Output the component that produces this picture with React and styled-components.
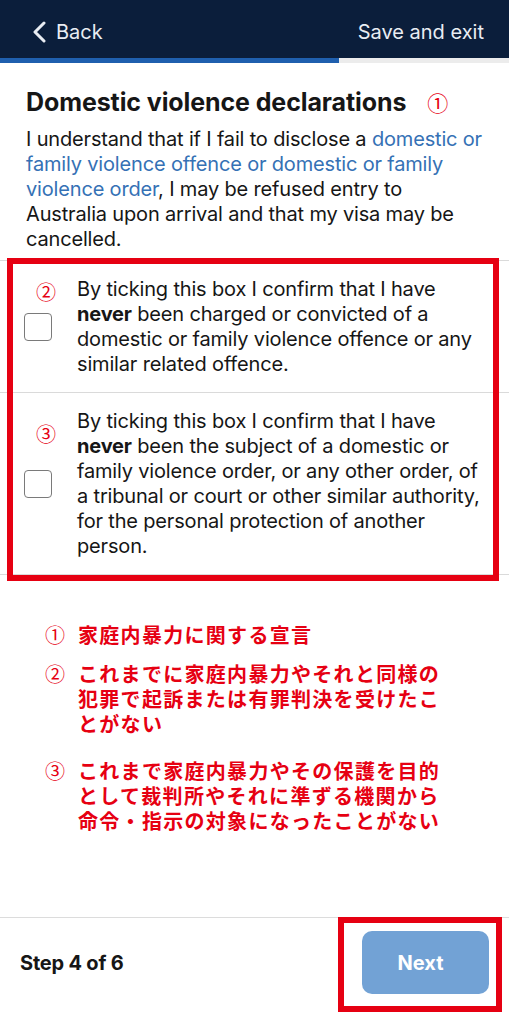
import React from "react";
import styled, { createGlobalStyle } from "styled-components";

const red = "#e60012";
const navy = "#0b1e3b";
const textColor = "#161616";

const GlobalStyle = createGlobalStyle`
  html, body {
    margin: 0;
    padding: 0;
    background: #ffffff;
  }
  body {
    font-family: Inter, "Liberation Sans", "Noto Sans CJK JP", sans-serif;
    color: ${textColor};
  }
  * {
    box-sizing: border-box;
  }
`;

const Page = styled.div`
  display: flex;
  flex-direction: column;
  width: 509px;
  height: 1024px;
  overflow: hidden;
  background: #ffffff;
`;

const Header = styled.header`
  display: flex;
  align-items: center;
  justify-content: space-between;
  height: 58px;
  padding: 6px 25px 0 31px;
  background: ${navy};
  color: #e9edf3;
  font-size: 20px;
`;

const BackLink = styled.div`
  display: flex;
  align-items: center;
  gap: 9px;
`;

const Progress = styled.div`
  height: 5px;
  background: #ececec;
`;

const ProgressFill = styled.div`
  height: 100%;
  background: #1f5fae;
`;

const Content = styled.main`
  padding: 24px 22px 0 26px;
`;

const Title = styled.h1`
  display: flex;
  align-items: center;
  gap: 21px;
  margin: 0;
  font-size: 25px;
  line-height: 30px;
  font-weight: 700;
  letter-spacing: -0.1px;
`;

const Circled = styled.span`
  font-family: "Noto Sans CJK JP", sans-serif;
  font-weight: 400;
  color: ${red};
  font-size: ${(props) => props.size || 20}px;
  line-height: 1;
`;

const Intro = styled.p`
  margin: 10px 0 0;
  font-size: 20px;
  line-height: 25px;
  letter-spacing: -0.17px;
`;

const Link = styled.span`
  color: #3571b5;
`;

const List = styled.div`
  position: relative;
  margin-top: 8px;
  border-top: 1px solid #dadada;
  border-bottom: 1px solid #dadada;
`;

const Row = styled.div`
  position: relative;
  display: flex;
  align-items: center;
  gap: 25px;
  padding: 16px 20px 15px 24px;
  & + & {
    border-top: 1px solid #dadada;
  }
`;

const RowNumber = styled(Circled)`
  position: absolute;
  left: 36px;
  top: ${(props) => props.top}px;
`;

const Checkbox = styled.span`
  flex: none;
  width: 28px;
  height: 28px;
  border: 1.5px solid #7a7a7a;
  border-radius: 4px;
`;

const RowText = styled.div`
  font-size: 20px;
  line-height: 25px;
  letter-spacing: -0.17px;
`;

const RedFrame = styled.div`
  position: absolute;
  top: ${(props) => props.top}px;
  left: ${(props) => props.left}px;
  right: ${(props) => props.right}px;
  bottom: ${(props) => props.bottom}px;
  border: 6px solid ${red};
  pointer-events: none;
`;

const Notes = styled.ol`
  list-style: none;
  margin: 47px 0 0;
  padding: 0 0 0 45px;
  color: ${red};
`;

const Note = styled.li`
  display: grid;
  grid-template-columns: 33px 372px;
  margin-bottom: ${(props) => props.after || 0}px;
  font-family: "Noto Sans CJK JP", sans-serif;
  font-weight: 700;
  font-size: 20px;
  line-height: 25px;
  letter-spacing: 1.3px;
`;

const NoteNumber = styled.span`
  font-weight: 400;
  letter-spacing: 0;
`;

const Spacer = styled.div`
  flex: 1;
`;

const Footer = styled.footer`
  display: flex;
  align-items: flex-start;
  justify-content: space-between;
  height: 107px;
  padding: 13px 20px 0 20px;
  border-top: 1px solid #dcdcdc;
`;

const StepLabel = styled.div`
  height: 63px;
  display: flex;
  align-items: center;
  font-size: 20px;
  font-weight: 700;
  letter-spacing: -0.2px;
`;

const ButtonWrap = styled.div`
  position: relative;
`;

const NextButton = styled.button`
  width: 127px;
  height: 63px;
  padding: 0 10px 0 0;
  border: none;
  border-radius: 10px;
  background: #72a2d5;
  color: #ffffff;
  font-family: inherit;
  font-size: 20px;
  font-weight: 700;
`;

const ChevronLeft = () => (
  <svg width="16" height="22" viewBox="0 0 16 22" fill="none">
    <path
      d="M13 2 L4 11 L13 20"
      stroke="#e9edf3"
      strokeWidth="3"
      strokeLinecap="round"
      strokeLinejoin="round"
    />
  </svg>
);

const notes = [
  { n: "①", text: "家庭内暴力に関する宣言", after: 14 },
  {
    n: "②",
    text: "これまでに家庭内暴力やそれと同様の犯罪で起訴または有罪判決を受けたことがない",
    after: 22,
  },
  {
    n: "③",
    text: "これまで家庭内暴力やその保護を目的として裁判所やそれに準ずる機関から命令・指示の対象になったことがない",
    after: 0,
  },
];

export default function App() {
  return (
    <Page>
      <GlobalStyle />
      <Header>
        <BackLink>
          <ChevronLeft />
          Back
        </BackLink>
        <span>Save and exit</span>
      </Header>
      <Progress>
        <ProgressFill style={{ width: `${(4 / 6) * 100}%` }} />
      </Progress>

      <Content>
        <Title>
          Domestic violence declarations
          <Circled size={21}>①</Circled>
        </Title>
        <Intro>
          I understand that if I fail to disclose a{" "}
          <Link>
            domestic or family violence offence or domestic or family violence
            order
          </Link>
          , I may be refused entry to Australia upon arrival and that my visa
          may be cancelled.
        </Intro>
      </Content>

      <List>
        <Row>
          <RowNumber top={21}>②</RowNumber>
          <Checkbox />
          <RowText>
            By ticking this box I confirm that I have <b>never</b> been charged
            or convicted of a domestic or family violence offence or any similar
            related offence.
          </RowText>
        </Row>
        <Row>
          <RowNumber top={31}>③</RowNumber>
          <Checkbox />
          <RowText>
            By ticking this box I confirm that I have <b>never</b> been the
            subject of a domestic or family violence order, or any other order,
            of a tribunal or court or other similar authority, for the personal
            protection of another person.
          </RowText>
        </Row>
        <RedFrame top={-3} left={7} right={10} bottom={-7} />
      </List>

      <Notes>
        {notes.map((note) => (
          <Note key={note.n} after={note.after}>
            <NoteNumber>{note.n}</NoteNumber>
            <span>{note.text}</span>
          </Note>
        ))}
      </Notes>

      <Spacer />

      <Footer>
        <StepLabel>Step 4 of 6</StepLabel>
        <ButtonWrap>
          <NextButton>Next</NextButton>
          <RedFrame top={-14} left={-24} right={-13} bottom={-18} />
        </ButtonWrap>
      </Footer>
    </Page>
  );
}
